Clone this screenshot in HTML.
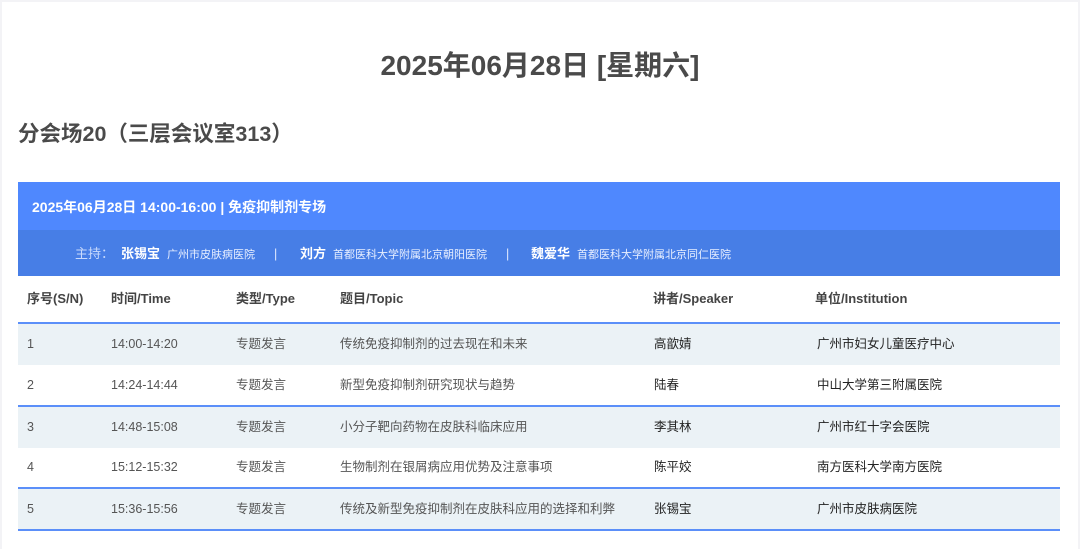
<!DOCTYPE html>
<html><head><meta charset="utf-8"><style>
html,body{margin:0;padding:0;}
body{width:1080px;height:549px;background:#f3f3f6;font-family:"Liberation Sans","Noto Sans CJK SC",sans-serif;color:#333;position:relative;overflow:hidden}
.page{position:absolute;left:2px;top:2px;width:1076px;height:547px;background:#fff}
.t1{position:absolute;left:0;width:1080px;top:44px;text-align:center;font-size:28px;font-weight:bold;color:#4a4a4a}
.t2{position:absolute;left:18px;top:117px;font-size:21.5px;font-weight:bold;color:#4a4a4a}
.bar{position:absolute;left:18px;width:1042px}
.c{position:absolute;font-size:12.5px;line-height:18px;white-space:nowrap}
.row{position:absolute;left:18px;width:1042px;height:41px}
</style></head><body><div class="page"></div>
<div class="t1">2025年06月28日 [星期六]</div>
<div class="t2">分会场20（三层会议室313）</div>
<div class="bar" style="top:182px;height:48px;background:#4f88fe"></div>
<div class="c" style="left:32px;top:198px;color:#fff;font-weight:bold;font-size:14px">2025年06月28日 14:00-16:00 | 免疫抑制剂专场</div>
<div class="bar" style="top:230px;height:46px;background:#477ee6"></div>
<div class="c" style="left:75px;top:245px;color:#c9dafc;font-size:13px">主持：</div>
<div class="c" style="left:121px;top:245px;color:#fff;font-weight:bold;font-size:13px">张锡宝</div>
<div class="c" style="left:167px;top:246px;color:#e8efff;font-size:11px">广州市皮肤病医院</div>
<div class="c" style="left:274px;top:245px;color:#dfe8ff">|</div>
<div class="c" style="left:300px;top:245px;color:#fff;font-weight:bold;font-size:13px">刘方</div>
<div class="c" style="left:333px;top:246px;color:#e8efff;font-size:11px">首都医科大学附属北京朝阳医院</div>
<div class="c" style="left:506px;top:245px;color:#dfe8ff">|</div>
<div class="c" style="left:531px;top:245px;color:#fff;font-weight:bold;font-size:13px">魏爱华</div>
<div class="c" style="left:577px;top:246px;color:#e8efff;font-size:11px">首都医科大学附属北京同仁医院</div>

<div class="c" style="left:27px;top:290px;font-weight:bold;color:#444;font-size:13px">序号(S/N)</div>
<div class="c" style="left:111px;top:290px;font-weight:bold;color:#444;font-size:13px">时间/Time</div>
<div class="c" style="left:236px;top:290px;font-weight:bold;color:#444;font-size:13px">类型/Type</div>
<div class="c" style="left:340px;top:290px;font-weight:bold;color:#444;font-size:13px">题目/Topic</div>
<div class="c" style="left:653px;top:290px;font-weight:bold;color:#444;font-size:13px">讲者/Speaker</div>
<div class="c" style="left:815px;top:290px;font-weight:bold;color:#444;font-size:13px">单位/Institution</div>

<div class="bar" style="top:322px;height:2px;background:#5b8ff9"></div>
<div class="row" style="top:324px;background:#ebf2f6"></div>
<div class="bar" style="top:405px;height:2px;background:#5b8ff9"></div>
<div class="row" style="top:407px;background:#ebf2f6"></div>
<div class="bar" style="top:487px;height:2px;background:#5b8ff9"></div>
<div class="row" style="top:489px;background:#ebf2f6"></div>
<div class="bar" style="top:529px;height:2px;background:#5b8ff9"></div>

<div class="c" style="left:27px;top:335px;color:#555">1</div><div class="c" style="left:111px;top:335px;color:#555">14:00-14:20</div><div class="c" style="left:236px;top:335px;color:#555">专题发言</div><div class="c" style="left:340px;top:335px;color:#555">传统免疫抑制剂的过去现在和未来</div><div class="c" style="left:654px;top:335px;color:#222">高歆婧</div><div class="c" style="left:817px;top:335px;color:#222">广州市妇女儿童医疗中心</div>
<div class="c" style="left:27px;top:376px;color:#555">2</div><div class="c" style="left:111px;top:376px;color:#555">14:24-14:44</div><div class="c" style="left:236px;top:376px;color:#555">专题发言</div><div class="c" style="left:340px;top:376px;color:#555">新型免疫抑制剂研究现状与趋势</div><div class="c" style="left:654px;top:376px;color:#222">陆春</div><div class="c" style="left:817px;top:376px;color:#222">中山大学第三附属医院</div>
<div class="c" style="left:27px;top:418px;color:#555">3</div><div class="c" style="left:111px;top:418px;color:#555">14:48-15:08</div><div class="c" style="left:236px;top:418px;color:#555">专题发言</div><div class="c" style="left:340px;top:418px;color:#555">小分子靶向药物在皮肤科临床应用</div><div class="c" style="left:654px;top:418px;color:#222">李其林</div><div class="c" style="left:817px;top:418px;color:#222">广州市红十字会医院</div>
<div class="c" style="left:27px;top:458px;color:#555">4</div><div class="c" style="left:111px;top:458px;color:#555">15:12-15:32</div><div class="c" style="left:236px;top:458px;color:#555">专题发言</div><div class="c" style="left:340px;top:458px;color:#555">生物制剂在银屑病应用优势及注意事项</div><div class="c" style="left:654px;top:458px;color:#222">陈平姣</div><div class="c" style="left:817px;top:458px;color:#222">南方医科大学南方医院</div>
<div class="c" style="left:27px;top:500px;color:#555">5</div><div class="c" style="left:111px;top:500px;color:#555">15:36-15:56</div><div class="c" style="left:236px;top:500px;color:#555">专题发言</div><div class="c" style="left:340px;top:500px;color:#555">传统及新型免疫抑制剂在皮肤科应用的选择和利弊</div><div class="c" style="left:654px;top:500px;color:#222">张锡宝</div><div class="c" style="left:817px;top:500px;color:#222">广州市皮肤病医院</div>
</body></html>
